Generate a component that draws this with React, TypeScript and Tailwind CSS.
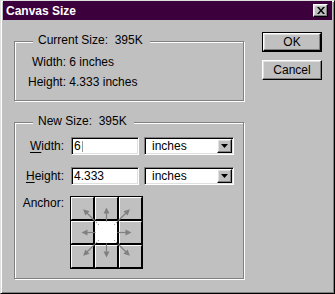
const raised =
  'border border-t-white border-l-white border-r-black border-b-black shadow-[inset_-1px_-1px_0_#808080,inset_1px_1px_0_#dfdfdf]';
const sunken =
  'border border-t-[#808080] border-l-[#808080] border-r-white border-b-white shadow-[inset_1px_1px_0_#000,inset_-1px_-1px_0_#dfdfdf]';

function GroupBox({ title, className, children }: { title: string; className?: string; children: React.ReactNode }) {
  return (
    <div className={`relative w-[230px] border border-[#808080] shadow-[inset_1px_1px_0_#fff,1px_1px_0_#fff] ${className ?? ''}`}>
      <span className="absolute -top-[9px] left-[18px] whitespace-pre bg-[#c0c0c0] pl-[5px] pr-[7px] leading-[14px]">
        {title}
      </span>
      {children}
    </div>
  );
}

function Field({ value, caret }: { value: string; caret?: boolean }) {
  return (
    <div className={`ml-[7px] flex h-[18px] w-[68px] items-center bg-white pl-[2px] ${sunken}`}>
      <span className="leading-[14px]">{value}</span>
      {caret && <span className="ml-px h-[11px] w-px bg-[#9a9a9a]" />}
    </div>
  );
}

function Units() {
  return (
    <div className={`ml-[5px] flex h-[18px] w-[90px] items-stretch bg-white p-px ${sunken}`}>
      <span className="flex-1 pl-[6px] leading-[14px]">inches</span>
      <div className={`flex w-[15px] items-center justify-center bg-[#c0c0c0] ${raised}`}>
        <svg width="7" height="4" viewBox="0 0 7 4">
          <path d="M0 0h7L3.5 4z" fill="#000" />
        </svg>
      </div>
    </div>
  );
}

function Row({ label, u, children }: { label: string; u: string; children: React.ReactNode }) {
  return (
    <div className="flex items-center">
      <span className="w-[49px] text-right leading-[14px]">
        <span className="underline underline-offset-2">{u}</span>
        {label}
      </span>
      {children}
    </div>
  );
}

function Arrow({ angle, tip, from }: { angle: number; tip: number; from: number }) {
  const c = 36.5;
  return (
    <g transform={`rotate(${angle} ${c} ${c})`}>
      <line x1={c} y1={c - from} x2={c} y2={c - tip + 5} stroke="#808080" strokeWidth="1.2" />
      <polygon points={`${c},${c - tip} ${c - 3},${c - tip + 6} ${c + 3},${c - tip + 6}`} fill="#808080" />
      <line x1={c} y1={c - 11} x2={c} y2={c - from} stroke="#808080" strokeWidth="1" strokeDasharray="1 1.5" />
    </g>
  );
}

function Anchor() {
  const cells = Array.from({ length: 9 }, (_, i) => i);
  return (
    <div className="relative ml-[6px] grid w-[73px] grid-cols-[23px_23px_23px] gap-px bg-black p-px">
      {cells.map((i) => (
        <div
          key={i}
          className={`h-[23px] border border-t-white border-l-white border-r-black border-b-black ${
            i === 4 ? 'bg-white' : 'bg-[#c0c0c0]'
          }`}
        />
      ))}
      <svg className="pointer-events-none absolute inset-0" width="73" height="73" viewBox="0 0 73 73">
        {[0, 90, 180, 270].map((a) => (
          <Arrow key={a} angle={a} tip={25} from={12} />
        ))}
        {[45, 135, 225, 315].map((a) => (
          <Arrow key={a} angle={a} tip={33} from={17} />
        ))}
      </svg>
    </div>
  );
}

export default function App() {
  return (
    <div
      className="flex h-[294px] w-[335px] flex-col border border-t-[#dfdfdf] border-l-[#dfdfdf] border-r-black border-b-black bg-[#c0c0c0] px-[2px] text-[12px] text-black shadow-[inset_1px_1px_0_#fff,inset_-1px_-1px_0_#808080]"
      style={{ fontFamily: '"Liberation Sans", Arial, sans-serif' }}
    >
      <div className="flex h-[19px] items-center justify-between bg-[#3c003c] pl-[3px] pr-[4px]">
        <span className="font-bold text-white">Canvas Size</span>
        <div className={`flex h-[13px] w-[15px] items-center justify-center bg-[#c0c0c0] ${raised}`}>
          <svg width="8" height="7" viewBox="0 0 8 7">
            <path d="M0 0h2l2 2.5L6 0h2L5 3.5 8 7H6L4 4.5 2 7H0l3-3.5z" fill="#000" />
          </svg>
        </div>
      </div>

      <div className="flex pl-[11px]">
        <div className="flex flex-col">
          <GroupBox title="Current Size:  395K" className="mt-[21px] h-[60px] pt-[13px]">
            <div className="pl-[17px] leading-[14px]">Width: 6 inches</div>
            <div className="mt-[6px] pl-[13px] leading-[14px]">Height: 4.333 inches</div>
          </GroupBox>

          <GroupBox title="New Size:  395K" className="mt-[21px] h-[157px] pt-[14px]">
            <Row u="W" label="idth:">
              <Field value="6" caret />
              <Units />
            </Row>
            <div className="mt-[12px]">
              <Row u="H" label="eight:">
                <Field value="4.333" />
                <Units />
              </Row>
            </div>
            <div className="mt-[11px] flex items-start">
              <span className="w-[49px] text-right leading-[14px]">Anchor:</span>
              <Anchor />
            </div>
          </GroupBox>
        </div>

        <div className="ml-[18px] mt-[12px] flex flex-col">
          <div className="border border-black">
            <div className={`flex h-[18px] w-[58px] items-center justify-center ${raised}`}>OK</div>
          </div>
          <div className={`mt-[8px] flex h-[20px] w-[60px] items-center justify-center ${raised}`}>Cancel</div>
        </div>
      </div>
    </div>
  );
}
